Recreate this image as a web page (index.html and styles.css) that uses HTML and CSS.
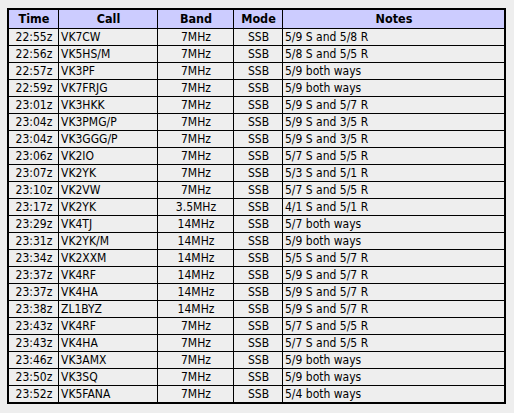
FILE: index.html
```html
<!DOCTYPE html>
<html>
<head>
<meta charset="utf-8">
<link rel="stylesheet" href="styles.css">
</head>
<body>
<div class="wrap">
<table class="log">
<colgroup>
<col class="c-time"><col class="c-call"><col class="c-band"><col class="c-mode"><col class="c-notes">
</colgroup>
<thead>
<tr><th>Time</th><th>Call</th><th>Band</th><th>Mode</th><th>Notes</th></tr>
</thead>
<tbody>
<tr><td class="ctr">22:55z</td><td>VK7CW</td><td class="ctr">7MHz</td><td class="ctr">SSB</td><td>5/9 S and 5/8 R</td></tr>
<tr><td class="ctr">22:56z</td><td>VK5HS/M</td><td class="ctr">7MHz</td><td class="ctr">SSB</td><td>5/8 S and 5/5 R</td></tr>
<tr><td class="ctr">22:57z</td><td>VK3PF</td><td class="ctr">7MHz</td><td class="ctr">SSB</td><td>5/9 both ways</td></tr>
<tr><td class="ctr">22:59z</td><td>VK7FRJG</td><td class="ctr">7MHz</td><td class="ctr">SSB</td><td>5/9 both ways</td></tr>
<tr><td class="ctr">23:01z</td><td>VK3HKK</td><td class="ctr">7MHz</td><td class="ctr">SSB</td><td>5/9 S and 5/7 R</td></tr>
<tr><td class="ctr">23:04z</td><td>VK3PMG/P</td><td class="ctr">7MHz</td><td class="ctr">SSB</td><td>5/9 S and 3/5 R</td></tr>
<tr><td class="ctr">23:04z</td><td>VK3GGG/P</td><td class="ctr">7MHz</td><td class="ctr">SSB</td><td>5/9 S and 3/5 R</td></tr>
<tr><td class="ctr">23:06z</td><td>VK2IO</td><td class="ctr">7MHz</td><td class="ctr">SSB</td><td>5/7 S and 5/5 R</td></tr>
<tr><td class="ctr">23:07z</td><td>VK2YK</td><td class="ctr">7MHz</td><td class="ctr">SSB</td><td>5/3 S and 5/1 R</td></tr>
<tr><td class="ctr">23:10z</td><td>VK2VW</td><td class="ctr">7MHz</td><td class="ctr">SSB</td><td>5/7 S and 5/5 R</td></tr>
<tr><td class="ctr">23:17z</td><td>VK2YK</td><td class="ctr">3.5MHz</td><td class="ctr">SSB</td><td>4/1 S and 5/1 R</td></tr>
<tr><td class="ctr">23:29z</td><td>VK4TJ</td><td class="ctr">14MHz</td><td class="ctr">SSB</td><td>5/7 both ways</td></tr>
<tr><td class="ctr">23:31z</td><td>VK2YK/M</td><td class="ctr">14MHz</td><td class="ctr">SSB</td><td>5/9 both ways</td></tr>
<tr><td class="ctr">23:34z</td><td>VK2XXM</td><td class="ctr">14MHz</td><td class="ctr">SSB</td><td>5/5 S and 5/7 R</td></tr>
<tr><td class="ctr">23:37z</td><td>VK4RF</td><td class="ctr">14MHz</td><td class="ctr">SSB</td><td>5/9 S and 5/7 R</td></tr>
<tr><td class="ctr">23:37z</td><td>VK4HA</td><td class="ctr">14MHz</td><td class="ctr">SSB</td><td>5/9 S and 5/7 R</td></tr>
<tr><td class="ctr">23:38z</td><td>ZL1BYZ</td><td class="ctr">14MHz</td><td class="ctr">SSB</td><td>5/9 S and 5/7 R</td></tr>
<tr><td class="ctr">23:43z</td><td>VK4RF</td><td class="ctr">7MHz</td><td class="ctr">SSB</td><td>5/7 S and 5/5 R</td></tr>
<tr><td class="ctr">23:43z</td><td>VK4HA</td><td class="ctr">7MHz</td><td class="ctr">SSB</td><td>5/7 S and 5/5 R</td></tr>
<tr><td class="ctr">23:46z</td><td>VK3AMX</td><td class="ctr">7MHz</td><td class="ctr">SSB</td><td>5/9 both ways</td></tr>
<tr><td class="ctr">23:50z</td><td>VK3SQ</td><td class="ctr">7MHz</td><td class="ctr">SSB</td><td>5/9 both ways</td></tr>
<tr><td class="ctr">23:52z</td><td>VK5FANA</td><td class="ctr">7MHz</td><td class="ctr">SSB</td><td>5/4 both ways</td></tr>
</tbody>
</table>
</div>
</body>
</html>
```

FILE: styles.css
```css
html, body {
  margin: 0;
  padding: 0;
  background: #eeeeee;
}
.wrap {
  padding: 8px 0 0 7px;
}
.log {
  border-collapse: separate;
  border-spacing: 0;
  border: 2px solid #000;
  table-layout: fixed;
  width: 499px;
  font-family: "DejaVu Sans Condensed", "DejaVu Sans", sans-serif;
  font-stretch: condensed;
  font-size: 12px;
  color: #000;
  background: #eeeeee;
}
.c-time { width: 50px; }
.c-call { width: 99px; }
.c-band { width: 76px; }
.c-mode { width: 49px; }
.c-notes { width: 221px; }
.log th, .log td {
  box-sizing: border-box;
  border-right: 1px solid #000;
  border-bottom: 1px solid #000;
  padding: 0 1px 0 2px;
  white-space: nowrap;
  overflow: hidden;
  text-align: left;
}
.log th:last-child, .log td:last-child {
  border-right: none;
}
.log tbody tr:last-child td {
  border-bottom: none;
  height: 16px;
}
.log th {
  background: #ccccff;
  font-weight: bold;
  font-size: 12.5px;
  text-align: center;
  height: 19px;
  line-height: 18px;
}
.log td {
  height: 17px;
  line-height: 16px;
}
.log td.ctr {
  text-align: center;
}
```
